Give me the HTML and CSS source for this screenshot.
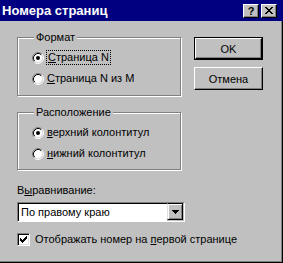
FILE: index.html
```html
<!DOCTYPE html>
<html lang="ru">
<head>
<meta charset="utf-8">
<title>Номера страниц</title>
<link rel="stylesheet" href="styles.css">
</head>
<body>
<div class="window">
  <div class="titlebar">
    <span class="title">Номера страниц</span>
    <div class="tbtns">
      <span class="tbtn tbtn-help">?</span>
      <span class="tbtn"><svg width="8" height="7" viewBox="0 0 8 7" shape-rendering="crispEdges"><path d="M0 0h2v1h-2zM6 0h2v1h-2zM1 1h2v1h-2zM5 1h2v1h-2zM2 2h4v1h-4zM3 3h2v1h-2zM2 4h4v1h-4zM1 5h2v1h-2zM5 5h2v1h-2zM0 6h2v1h-2zM6 6h2v1h-2z" fill="#000"/></svg></span>
    </div>
  </div>
  <div class="content">
    <div class="top">
      <div class="left">
        <fieldset class="group">
          <legend>Формат</legend>
          <div class="radio">
            <svg class="rb" width="12" height="12" viewBox="0 0 12 12"><circle cx="6" cy="6" r="4.5" fill="#fff"/><path d="M2.11 9.89A5.5 5.5 0 0 1 9.89 2.11" stroke="#808080" fill="none"/><path d="M9.89 2.11A5.5 5.5 0 0 1 2.11 9.89" stroke="#fff" fill="none"/><path d="M2.82 9.18A4.5 4.5 0 0 1 9.18 2.82" stroke="#000" fill="none"/><path d="M9.18 2.82A4.5 4.5 0 0 1 2.82 9.18" stroke="#dfdfdf" fill="none"/><circle cx="6" cy="6" r="2" fill="#000"/></svg>
            <span class="lbl focus"><u>С</u>траница N</span>
          </div>
          <div class="radio">
            <svg class="rb" width="12" height="12" viewBox="0 0 12 12"><circle cx="6" cy="6" r="4.5" fill="#fff"/><path d="M2.11 9.89A5.5 5.5 0 0 1 9.89 2.11" stroke="#808080" fill="none"/><path d="M9.89 2.11A5.5 5.5 0 0 1 2.11 9.89" stroke="#fff" fill="none"/><path d="M2.82 9.18A4.5 4.5 0 0 1 9.18 2.82" stroke="#000" fill="none"/><path d="M9.18 2.82A4.5 4.5 0 0 1 2.82 9.18" stroke="#dfdfdf" fill="none"/></svg>
            <span class="lbl"><u>С</u>траница N из M</span>
          </div>
        </fieldset>
        <fieldset class="group group2">
          <legend>Расположение</legend>
          <div class="radio">
            <svg class="rb" width="12" height="12" viewBox="0 0 12 12"><circle cx="6" cy="6" r="4.5" fill="#fff"/><path d="M2.11 9.89A5.5 5.5 0 0 1 9.89 2.11" stroke="#808080" fill="none"/><path d="M9.89 2.11A5.5 5.5 0 0 1 2.11 9.89" stroke="#fff" fill="none"/><path d="M2.82 9.18A4.5 4.5 0 0 1 9.18 2.82" stroke="#000" fill="none"/><path d="M9.18 2.82A4.5 4.5 0 0 1 2.82 9.18" stroke="#dfdfdf" fill="none"/><circle cx="6" cy="6" r="2" fill="#000"/></svg>
            <span class="lbl"><u>в</u>ерхний колонтитул</span>
          </div>
          <div class="radio">
            <svg class="rb" width="12" height="12" viewBox="0 0 12 12"><circle cx="6" cy="6" r="4.5" fill="#fff"/><path d="M2.11 9.89A5.5 5.5 0 0 1 9.89 2.11" stroke="#808080" fill="none"/><path d="M9.89 2.11A5.5 5.5 0 0 1 2.11 9.89" stroke="#fff" fill="none"/><path d="M2.82 9.18A4.5 4.5 0 0 1 9.18 2.82" stroke="#000" fill="none"/><path d="M9.18 2.82A4.5 4.5 0 0 1 2.82 9.18" stroke="#dfdfdf" fill="none"/></svg>
            <span class="lbl"><u>н</u>ижний колонтитул</span>
          </div>
        </fieldset>
      </div>
      <div class="right">
        <div class="btn-default"><div class="btn">OK</div></div>
        <div class="btn btn-cancel">Отмена</div>
      </div>
    </div>
    <div class="field-label">В<u>ы</u>равнивание:</div>
    <div class="combo">
      <div class="combo-text">По правому краю</div>
      <div class="combo-btn"><svg width="7" height="4" viewBox="0 0 7 4" shape-rendering="crispEdges"><path d="M0 0h7v1h-7zM1 1h5v1h-5zM2 2h3v1h-3zM3 3h1v1h-1z" fill="#000"/></svg></div>
    </div>
    <div class="check">
      <span class="cb"><svg width="7" height="7" viewBox="0 0 7 7" shape-rendering="crispEdges"><path d="M0 2h1v3h-1zM1 3h1v3h-1zM2 4h1v3h-1zM3 3h1v3h-1zM4 2h1v3h-1zM5 1h1v3h-1zM6 0h1v3h-1z" fill="#000"/></svg></span>
      <span class="lbl">Отображать номер на <u>п</u>ервой странице</span>
    </div>
  </div>
</div>
</body>
</html>
```

FILE: styles.css
```css
html, body {
  margin: 0;
  padding: 0;
  background: #c0c0c0;
}
body {
  font-family: "Liberation Sans", Arial, sans-serif;
  font-size: 11px;
  color: #000;
}
.window {
  width: 283px;
  height: 263px;
  box-sizing: border-box;
  background: #c0c0c0;
  box-shadow: inset -1px -1px 0 #000, inset -2px -2px 0 #808080;
  overflow: hidden;
}
.titlebar {
  height: 21px;
  background: #000080;
  display: flex;
  align-items: center;
  justify-content: space-between;
  padding: 0 6px 0 2px;
  box-sizing: border-box;
}
.title {
  color: #fff;
  font-weight: bold;
  font-size: 13px;
  line-height: 15px;
}
.tbtns {
  display: flex;
  gap: 2px;
}
.tbtn {
  width: 16px;
  height: 14px;
  box-sizing: border-box;
  background: #c0c0c0;
  border: 1px solid;
  border-color: #fff #000 #000 #fff;
  box-shadow: inset -1px -1px 0 #808080;
  display: flex;
  align-items: center;
  justify-content: center;
}
.tbtn-help {
  font-weight: bold;
  font-size: 11px;
  line-height: 12px;
}
.content {
  padding: 10px 0 0 17px;
}
.top {
  display: flex;
  gap: 13px;
}
.left {
  width: 164px;
  display: flex;
  flex-direction: column;
  gap: 10px;
}
.group {
  margin: 0;
  padding: 3px 0 6px 14px;
  border: 1px solid #808080;
  box-shadow: 1px 1px 0 #fff, inset 1px 1px 0 #fff;
  min-width: 0;
}
.group2 {
  padding-bottom: 5px;
}
.group legend {
  padding: 0 2px;
  margin-left: 2px;
  line-height: 13px;
  background: #c0c0c0;
}
.radio {
  height: 21px;
  display: flex;
  align-items: center;
  gap: 3px;
}
.rb {
  flex: none;
}
.lbl {
  line-height: 13px;
}
.focus {
  outline: 1px dotted #000;
  outline-offset: 0;
  padding: 0 1px;
}
u {
  text-decoration: underline;
  text-underline-offset: 1px;
}
.right {
  padding-top: 6px;
  display: flex;
  flex-direction: column;
  gap: 7px;
}
.btn-default {
  width: 69px;
  height: 23px;
  box-sizing: border-box;
  border: 1px solid #000;
}
.btn {
  height: 100%;
  box-sizing: border-box;
  border: 1px solid;
  border-color: #fff #000 #000 #fff;
  box-shadow: inset -1px -1px 0 #808080;
  display: flex;
  align-items: center;
  justify-content: center;
}
.btn-cancel {
  width: 69px;
  height: 23px;
}
.field-label {
  margin-top: 14px;
  line-height: 13px;
}
.combo {
  margin-top: 5px;
  width: 168px;
  height: 20px;
  box-sizing: border-box;
  border: 1px solid;
  border-color: #808080 #fff #fff #808080;
  display: flex;
}
.combo-text {
  flex: 1;
  background: #fff;
  border-top: 1px solid #000;
  border-left: 1px solid #000;
  padding-left: 2px;
  line-height: 17px;
}
.combo-btn {
  width: 16px;
  box-sizing: border-box;
  border: 1px solid;
  border-color: #000 #000 #000 #dfdfdf;
  box-shadow: inset 1px 1px 0 #fff, inset -1px -1px 0 #808080;
  display: flex;
  align-items: center;
  justify-content: center;
  background: #c0c0c0;
  margin-right: 1px;
  margin-bottom: 1px;
}
.check {
  margin-top: 11px;
  display: flex;
  align-items: center;
  gap: 5px;
  height: 13px;
}
.cb {
  width: 13px;
  height: 13px;
  box-sizing: border-box;
  border: 1px solid;
  border-color: #808080 #fff #fff #808080;
  box-shadow: inset 1px 1px 0 #000, inset -1px -1px 0 #dfdfdf;
  background: #fff;
  display: flex;
  align-items: center;
  justify-content: center;
}
```
